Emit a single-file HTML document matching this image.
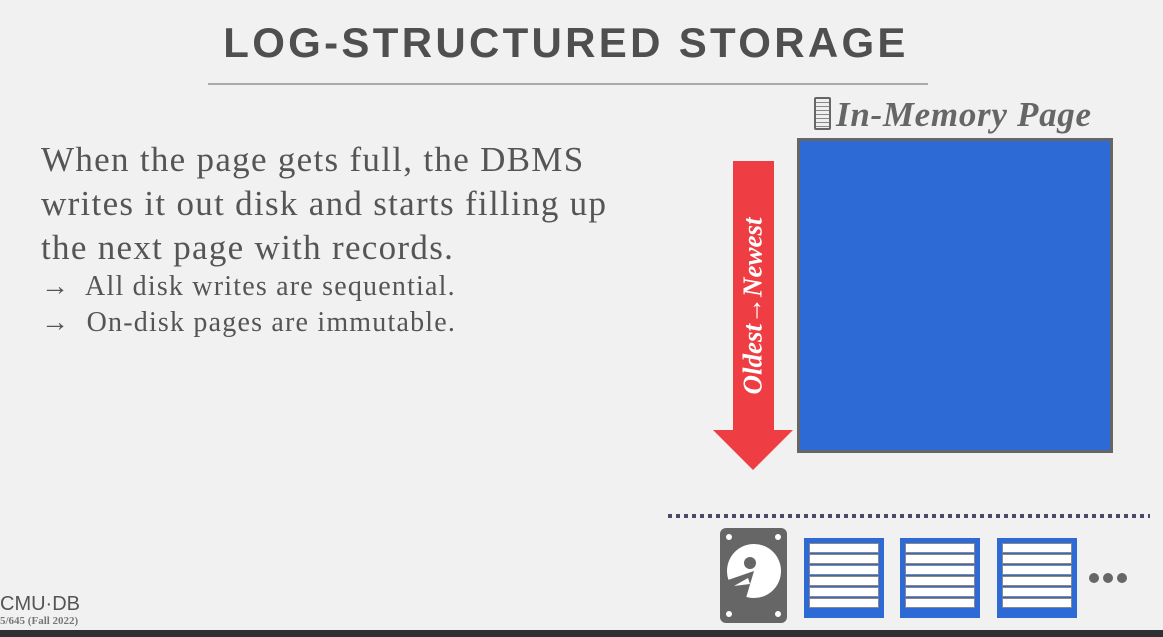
<!DOCTYPE html>
<html><head><style>
body{margin:0;width:1163px;height:637px;background:#f1f1f1;position:relative;overflow:hidden;font-family:"Liberation Serif",serif;color:#555}
.a{position:absolute}
.pg{position:absolute;top:538px;width:80px;height:80px;background:#2d6ad6;box-sizing:border-box;padding:5px 5px}
.pg div{height:8px;background:#fff;border:1px solid #888;margin-bottom:1px}
</style></head><body>
<div class="a" style="left:0;top:19px;width:1132px;text-align:center;font:bold 42px 'Liberation Sans',sans-serif;letter-spacing:3.3px;color:#4f4f4f">LOG-STRUCTURED STORAGE</div>
<div class="a" style="left:208px;top:83px;width:720px;height:2px;background:#aaa"></div>
<div class="a" style="left:41px;top:138px;font-size:35px;line-height:44px;letter-spacing:1.3px;color:#555">When the page gets full, the DBMS<br>writes it out disk and starts filling up<br>the next page with records.</div>
<div class="a" style="left:41px;top:269px;font-size:28px;line-height:36px;letter-spacing:1.2px;color:#555">→&nbsp; All disk writes are sequential.<br>→&nbsp; On-disk pages are immutable.</div>
<div class="a" style="left:836px;top:95px;font:italic bold 35px 'Liberation Serif',serif;color:#666;letter-spacing:0.7px">In-Memory Page</div>
<div class="a" style="left:814px;top:97px;width:17px;height:33px;border:2px solid #666;border-radius:2px;box-sizing:border-box;background:repeating-linear-gradient(#eee 0 3px,#888 3px 4px)"></div>
<div class="a" style="left:797px;top:138px;width:316px;height:315px;background:#2d6ad6;border:3px solid #666;box-sizing:border-box"></div>
<div class="a" style="left:733px;top:161px;width:41px;height:270px;background:#ee3e43"></div>
<div class="a" style="left:713px;top:430px;width:0;height:0;border-left:40px solid transparent;border-right:40px solid transparent;border-top:40px solid #ee3e43"></div>
<div class="a" style="left:753px;top:306px;transform:translate(-50%,-50%) rotate(-90deg);white-space:nowrap;font:italic bold 27px 'Liberation Serif',serif;color:#fff">Oldest→Newest</div>
<div class="a" style="left:668px;top:514px;width:482px;height:4px;background:repeating-linear-gradient(90deg,#4a4a6a 0 4px,transparent 4px 8px)"></div>
<svg class="a" style="left:720px;top:528px" width="68" height="96"><rect x="0" y="0" width="67" height="95" rx="6" fill="#666"/><circle cx="9" cy="9" r="3" fill="#fff"/><circle cx="58" cy="9" r="3" fill="#fff"/><circle cx="9" cy="86" r="3" fill="#fff"/><circle cx="58" cy="86" r="3" fill="#fff"/><circle cx="34" cy="43" r="27" fill="#fff"/><polygon points="34,43 8,52 12,68 26,70" fill="#666"/><polygon points="28,50 14,58 30,56" fill="#fff"/><circle cx="30" cy="35" r="6" fill="#666"/></svg>
<div class="pg" style="left:804px"><div></div><div></div><div></div><div></div><div></div><div></div></div>
<div class="pg" style="left:900px"><div></div><div></div><div></div><div></div><div></div><div></div></div>
<div class="pg" style="left:997px"><div></div><div></div><div></div><div></div><div></div><div></div></div>
<div class="a" style="left:1089px;top:573px;width:10px;height:10px;border-radius:50%;background:#666;box-shadow:14px 0 #666,28px 0 #666"></div>
<div class="a" style="left:0;top:593px;font:20px 'Liberation Sans',sans-serif;color:#555">CMU·DB</div>
<div class="a" style="left:0;top:615px;font:bold 11px 'Liberation Serif',serif;color:#777">5/645 (Fall 2022)</div>
<div class="a" style="left:0;top:630px;width:1163px;height:7px;background:#2e3033"></div>
</body></html>
